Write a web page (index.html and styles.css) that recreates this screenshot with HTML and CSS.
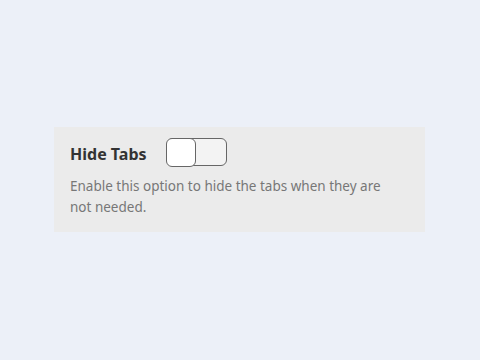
FILE: index.html
```html
<!DOCTYPE html>
<html>
<head>
<meta charset="utf-8">
<link rel="stylesheet" href="styles.css">
</head>
<body>
<div class="page">
  <div class="card">
    <div class="head">
      <span class="title">Hide Tabs</span>
      <span class="toggle"><span class="knob"></span></span>
    </div>
    <p class="desc">Enable this option to hide the tabs when they are not needed.</p>
  </div>
</div>
</body>
</html>
```
FILE: styles.css
```css
html, body { margin: 0; padding: 0; }
body { background: #ecf0f8; width: 480px; height: 360px; font-family: "Noto Sans", sans-serif; }
.page { padding: 127px 0 0 54px; }
.card {
  box-sizing: border-box;
  width: 371px;
  height: 105px;
  background: #ebebeb;
  padding: 11px 16px 0 16px;
}
.head { display: flex; align-items: center; gap: 20px; height: 28px; }
.title { font-weight: bold; font-size: 16px; color: #333; padding-top: 3px; }
.toggle {
  box-sizing: border-box;
  width: 60px; height: 28px;
  border: 1.5px solid #666;
  border-radius: 6px;
  background: #f3f3f3;
  display: flex;
}
.knob {
  box-sizing: border-box;
  width: 30px;
  margin: -1.5px 0 0 -1.5px;
  height: calc(100% + 3px);
  border: 1.5px solid #666;
  border-radius: 6px;
  background: #fff;
}
.desc {
  margin: 10px 0 0 0;
  font-size: 13.5px;
  line-height: 21px;
  color: #777;
  width: 330px;
}
```
